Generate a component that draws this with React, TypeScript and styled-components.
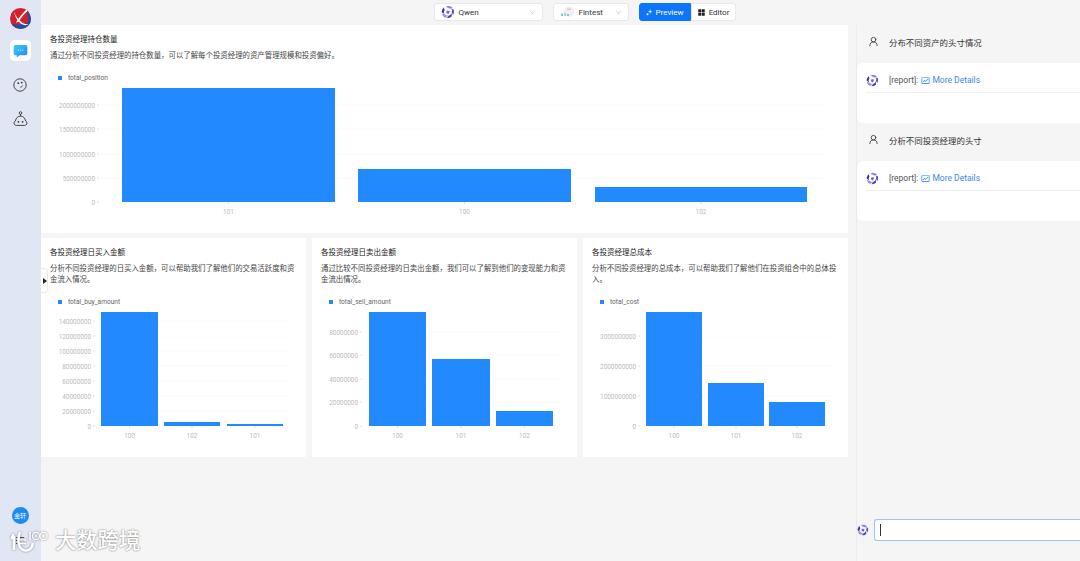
import React from 'react'
import styled, {createGlobalStyle} from 'styled-components'
import {AiFillAppstore, AiOutlineDown, AiOutlineFund} from 'react-icons/ai'
import {UserRound} from 'lucide-react'

const FONT = `Roboto, "Noto Sans CJK SC", "Liberation Sans", sans-serif`

const GlobalStyle = createGlobalStyle`
  html, body {
    margin: 0;
    padding: 0;
    height: 561px;
    overflow: hidden;
    background: #f5f5f6;
    font-family: ${FONT};
  }
  * {
    box-sizing: border-box;
  }
`

type Bar = {label: string; x: number; w: number; top: number}
type ChartData = {
  title: string
  description: string
  series: string
  width: number
  height: number
  base: number
  axisX: number
  ticks: {label: string; y: number}[]
  bars: Bar[]
}

const charts: ChartData[] = [
  {
    title: '各投资经理持仓数量',
    description: '通过分析不同投资经理的持仓数量，可以了解每个投资经理的资产管理规模和投资偏好。',
    series: 'total_position',
    width: 789,
    height: 136,
    base: 118,
    axisX: 47,
    ticks: [
      {label: '2000000000', y: 21},
      {label: '1500000000', y: 45},
      {label: '1000000000', y: 70},
      {label: '500000000', y: 94},
      {label: '0', y: 118}
    ],
    bars: [
      {label: '101', x: 72, w: 213, top: 4},
      {label: '100', x: 308, w: 213, top: 85},
      {label: '102', x: 545, w: 212, top: 103}
    ]
  },
  {
    title: '各投资经理日买入金额',
    description: '分析不同投资经理的日买入金额，可以帮助我们了解他们的交易活跃度和资金流入情况。',
    series: 'total_buy_amount',
    width: 256,
    height: 136,
    base: 118,
    axisX: 43,
    ticks: [
      {label: '140000000', y: 13},
      {label: '120000000', y: 28},
      {label: '100000000', y: 43},
      {label: '80000000', y: 58},
      {label: '60000000', y: 73},
      {label: '40000000', y: 88},
      {label: '20000000', y: 103},
      {label: '0', y: 118}
    ],
    bars: [
      {label: '100', x: 51, w: 57, top: 4},
      {label: '102', x: 114, w: 56, top: 114},
      {label: '101', x: 177, w: 56, top: 116}
    ]
  },
  {
    title: '各投资经理日卖出金额',
    description: '通过比较不同投资经理的日卖出金额，我们可以了解到他们的变现能力和资金流出情况。',
    series: 'total_sell_amount',
    width: 256,
    height: 136,
    base: 118,
    axisX: 39,
    ticks: [
      {label: '80000000', y: 24},
      {label: '60000000', y: 47},
      {label: '40000000', y: 71},
      {label: '20000000', y: 94},
      {label: '0', y: 118}
    ],
    bars: [
      {label: '100', x: 48, w: 57, top: 4},
      {label: '101', x: 111, w: 58, top: 51},
      {label: '102', x: 175, w: 57, top: 103}
    ]
  },
  {
    title: '各投资经理总成本',
    description: '分析不同投资经理的总成本，可以帮助我们了解他们在投资组合中的总体投入。',
    series: 'total_cost',
    width: 256,
    height: 136,
    base: 118,
    axisX: 46,
    ticks: [
      {label: '3000000000', y: 28},
      {label: '2000000000', y: 58},
      {label: '1000000000', y: 88},
      {label: '0', y: 118}
    ],
    bars: [
      {label: '100', x: 54, w: 56, top: 4},
      {label: '101', x: 116, w: 56, top: 75},
      {label: '102', x: 177, w: 56, top: 94}
    ]
  }
]

const replies = ['分布不同资产的头寸情况', '分析不同投资经理的头寸']

function BarChart({data}: {data: ChartData}) {
  return (
    <ChartSvg width={data.width} height={data.height}>
      {data.ticks.map((tick) => (
        <g key={tick.label}>
          {tick.label !== '0' && (
            <GridLine x1={data.axisX + 4} x2={data.width - 14} y1={tick.y} y2={tick.y} />
          )}
          <TickMark x1={data.axisX} x2={data.axisX + 2} y1={tick.y} y2={tick.y} />
          <AxisText x={data.axisX - 2} y={tick.y + 2.5} textAnchor="end">
            {tick.label}
          </AxisText>
        </g>
      ))}
      {data.bars.map((bar) => (
        <g key={bar.label}>
          <rect x={bar.x} y={bar.top} width={bar.w} height={data.base - bar.top} fill="#2389ff" />
          <TickMark
            x1={bar.x + bar.w / 2}
            x2={bar.x + bar.w / 2}
            y1={data.base}
            y2={data.base + 2}
          />
          <AxisText x={bar.x + bar.w / 2} y={data.base + 11.5} textAnchor="middle">
            {bar.label}
          </AxisText>
        </g>
      ))}
    </ChartSvg>
  )
}

function ChartCard({data, wide}: {data: ChartData; wide?: boolean}) {
  return (
    <Card $wide={wide}>
      <CardTitle>{data.title}</CardTitle>
      <CardDescription $wide={wide}>{data.description}</CardDescription>
      <Legend>
        <LegendDot />
        {data.series}
      </Legend>
      <BarChart data={data} />
    </Card>
  )
}

function QwenLogo({size = 14}: {size?: number}) {
  return (
    <svg width={size} height={size} viewBox="0 0 24 24">
      <path d="M12 1.500c3.400 0 6.300 1.300 8.200 3.600l-5 1.200-3.600-1.500L8.200 3z" fill="#8b7ee6" />
      <path d="M22 8c.9 3.400.3 6.600-1.500 9l-2.200-4.400.8-3.600-1.900-3.200z" fill="#5a4fcc" />
      <path d="M18.600 19.400c-2.400 2.400-5.600 3.400-8.600 3l2.900-4 3.400-1.600 1.600-3.200z" fill="#4a3fc0" />
      <path d="M7.600 22c-3.100-1.400-5.200-4-6-7l4.800.7 2.800 2.400 3.400.1z" fill="#9a90ec" />
      <path d="M1.200 12.400C1.200 9 2.600 6 5 4.100l1.300 4.700-1.600 3.200 1.100 3.400z" fill="#3a34ac" />
      <path d="M10 9.500l5 .6-2 5.400-4-2z" fill="#6a60d8" />
    </svg>
  )
}

function BrandLogo() {
  return (
    <svg width="21" height="21" viewBox="0 0 21 21">
      <defs>
        <clipPath id="brand-clip">
          <circle cx="10.500" cy="10.500" r="10.500" />
        </clipPath>
      </defs>
      <g clipPath="url(#brand-clip)">
        <rect width="21" height="21" fill="#d3202a" />
        <path d="M0 15c6 2.500 14 2 21-2v8H0z" fill="#1f4fa3" />
        <path d="M17 3c2 2 4 5 4 8v4l-3 1c1-4 0-9-2-12z" fill="#1f4fa3" />
        <path d="M4 3.500c1.500 4.500 4.500 8.500 8 11 1.800 1.300 4 2 6.500 1.800-2.800 1.700-6 .6-8.500-1.400C7 12.400 4.800 8.300 4 3.500z" fill="#fff" />
        <path d="M16.500 1.500C12.800 5 8.800 9.500 6 14.500l2.500-.4c2.400-4.200 5.400-8.200 9.500-11.700z" fill="#fff" />
      </g>
    </svg>
  )
}

function ChatTileIcon() {
  return (
    <svg width="15" height="14" viewBox="0 0 16 15">
      <defs>
        <linearGradient id="bubble" x1="0" y1="0" x2="1" y2="1">
          <stop offset="0" stopColor="#35cdf6" />
          <stop offset="1" stopColor="#2a86f2" />
        </linearGradient>
      </defs>
      <path
        d="M2.500 1h11A1.800 1.800 0 0 1 15.300 2.800v7.400A1.800 1.800 0 0 1 13.500 12H7l-3 2.400V12H2.500A1.800 1.800 0 0 1 .7 10.200V2.800A1.800 1.800 0 0 1 2.500 1z"
        fill="url(#bubble)"
      />
      <circle cx="5.600" cy="6.500" r="0.700" fill="#dff3ff" />
      <circle cx="8" cy="6.500" r="0.700" fill="#dff3ff" />
      <circle cx="10.400" cy="6.500" r="0.700" fill="#dff3ff" />
    </svg>
  )
}

function SmileIcon() {
  return (
    <svg width="14" height="14" viewBox="0 0 14 14" fill="none" stroke="#333" strokeWidth="0.9">
      <circle cx="7" cy="7" r="6.200" />
      <circle cx="5.300" cy="5.200" r="0.900" fill="#333" stroke="none" />
      <circle cx="8.700" cy="4.600" r="0.900" fill="#333" stroke="none" />
      <path d="M9.600 7.600c-.5 1-1.300 1.500-2.300 1.500" />
    </svg>
  )
}

function RobotIcon() {
  return (
    <svg width="15" height="16" viewBox="0 0 15 16" fill="none" stroke="#333" strokeWidth="0.9">
      <circle cx="7.500" cy="2" r="1.300" />
      <path d="M7.500 3.300v1.800" />
      <path d="M3.400 14.400h8.200c1.300 0 2.400-1 2.400-2.300 0-1-.6-1.800-1.400-2.100C12.100 7 10.100 5.100 7.500 5.100S2.900 7 2.400 10c-.8.3-1.400 1.100-1.400 2.100 0 1.300 1.100 2.300 2.400 2.300z" />
      <circle cx="5.400" cy="10.800" r="0.900" fill="#333" stroke="none" />
      <circle cx="9.600" cy="10.800" r="0.900" fill="#333" stroke="none" />
    </svg>
  )
}

function FintestLogo() {
  return (
    <svg width="15" height="12" viewBox="0 0 15 12">
      <circle cx="9" cy="5.500" r="5.200" fill="#eef0f4" />
      <rect x="7" y="2.500" width="4" height="1.500" fill="#f3c498" />
      <rect x="1" y="7.500" width="2" height="2.500" fill="#7cc4ea" />
      <rect x="4" y="7" width="2" height="3" fill="#a5d6a5" />
      <rect x="7" y="8" width="2" height="2" fill="#7cc4ea" />
    </svg>
  )
}

function SparkIcon() {
  return (
    <svg width="7" height="7" viewBox="0 0 7 7" fill="#fff">
      <path d="M4.200.500l.6 1.600 1.600.6-1.600.6-.6 1.600-.6-1.600L2 2.700l1.600-.6z" />
      <circle cx="1.500" cy="5.300" r="1" />
    </svg>
  )
}

export default function App() {
  return (
    <Page>
      <GlobalStyle />
      <Sidebar>
        <BrandLogo />
        <ChatTile>
          <ChatTileIcon />
        </ChatTile>
        <SideIcon>
          <SmileIcon />
        </SideIcon>
        <SideIcon>
          <RobotIcon />
        </SideIcon>
        <SideBottom>
          <Avatar>金轩</Avatar>
          <MenuLines />
        </SideBottom>
      </Sidebar>
      <Main>
        <TopBar>
          <Select $width={109}>
            <QwenLogo />
            <SelectLabel>Qwen</SelectLabel>
            <Chevron />
          </Select>
          <Select $width={76}>
            <FintestLogo />
            <SelectLabel>Fintest</SelectLabel>
            <Chevron />
          </Select>
          <Segmented>
            <Segment $active>
              <SparkIcon />
              Preview
            </Segment>
            <Segment>
              <AiFillAppstore size={9} color="#222" />
              Editor
            </Segment>
          </Segmented>
        </TopBar>
        <Content>
          <Dashboard>
            <ChartCard data={charts[0]} wide />
            {charts.slice(1).map((chart) => (
              <ChartCard key={chart.series} data={chart} />
            ))}
            <CollapseTab />
          </Dashboard>
          <ChatPanel>
            {replies.map((question) => (
              <Exchange key={question}>
                <Question>
                  <UserRound size={11} color="#333" strokeWidth={1.8} />
                  {question}
                </Question>
                <Answer>
                  <AnswerRow>
                    <QwenLogo size={13} />
                    <AnswerText>
                      [report]:
                      <AiOutlineFund size={9} color="#1677ff" />
                      <DetailsLink>More Details</DetailsLink>
                    </AnswerText>
                  </AnswerRow>
                </Answer>
              </Exchange>
            ))}
            <InputRow>
              <QwenLogo size={12} />
              <InputBox>
                <Caret />
              </InputBox>
            </InputRow>
          </ChatPanel>
        </Content>
      </Main>
      <Watermark>
        <WatermarkMark>
          <svg width="38" height="22" viewBox="0 0 38 22" fill="none" stroke="#fff">
            <path d="M3.500 4L1.500 9M4 6v14" strokeWidth="2.500" />
            <path d="M10 2C7 10 8 19 15 20.500c4.500.5 7.500-3 8-7.500" strokeWidth="2.500" />
            <path d="M8 10h8M8 13.500h8" strokeWidth="1.500" />
            <path d="M20 2v8" strokeWidth="1.500" />
            <circle cx="26" cy="6" r="3.600" strokeWidth="1.200" />
            <circle cx="33.500" cy="6" r="3.600" strokeWidth="1.200" />
          </svg>
        </WatermarkMark>
        <WatermarkText>大数跨境</WatermarkText>
      </Watermark>
    </Page>
  )
}

const Page = styled.div`
  position: relative;
  display: flex;
  width: 1080px;
  height: 561px;
  overflow: hidden;
  background: #f5f5f6;
`

const Sidebar = styled.nav`
  display: flex;
  flex-direction: column;
  align-items: center;
  flex: 0 0 41px;
  padding: 8px 1px 0 0;
  background: #e0e6f3;
`

const ChatTile = styled.div`
  display: flex;
  align-items: center;
  justify-content: center;
  width: 21px;
  height: 21px;
  margin-top: 11px;
  border-radius: 5px;
  background: #fff;
`

const SideIcon = styled.div`
  display: flex;
  align-items: center;
  justify-content: center;
  width: 21px;
  height: 16px;
  margin-top: 16px;

  & + & {
    margin-top: 18px;
  }
`

const SideBottom = styled.div`
  display: flex;
  flex-direction: column;
  align-items: center;
  gap: 13px;
  margin-top: auto;
  padding-bottom: 17px;
`

const Avatar = styled.div`
  display: flex;
  align-items: center;
  justify-content: center;
  width: 17px;
  height: 17px;
  border-radius: 50%;
  background: #1b8bf5;
  color: #fff;
  font-size: 6px;
`

const MenuLines = styled.div`
  position: relative;
  width: 8px;
  height: 7px;
  border-top: 1px solid #555;
  border-bottom: 1px solid #555;

  &::after {
    content: '';
    position: absolute;
    top: 2px;
    left: 0;
    right: 0;
    height: 1px;
    background: #555;
  }
`

const Main = styled.div`
  display: flex;
  flex-direction: column;
  flex: 1;
  min-width: 0;
`

const TopBar = styled.header`
  display: flex;
  align-items: flex-start;
  justify-content: center;
  gap: 10px;
  flex: 0 0 25px;
  padding: 3px 0 0 48px;
`

const Select = styled.div<{$width: number}>`
  display: flex;
  align-items: center;
  width: ${(p) => p.$width}px;
  height: 18px;
  padding: 0 6px;
  border: 1px solid #e8e8ea;
  border-radius: 3px;
  background: #fff;
`

const SelectLabel = styled.span`
  flex: 1;
  margin-left: 4px;
  color: #333;
  font-size: 8px;
`

const Chevron = styled(AiOutlineDown).attrs({size: 7})`
  color: #c4c4c4;
`

const Segmented = styled.div`
  display: flex;
  height: 18px;
`

const Segment = styled.div<{$active?: boolean}>`
  display: flex;
  align-items: center;
  justify-content: center;
  gap: 3px;
  width: ${(p) => (p.$active ? 52 : 45)}px;
  border: 1px solid ${(p) => (p.$active ? '#0c75fc' : '#e8e8ea')};
  border-radius: ${(p) => (p.$active ? '3px 0 0 3px' : '0 3px 3px 0')};
  background: ${(p) => (p.$active ? '#0c75fc' : '#fff')};
  color: ${(p) => (p.$active ? '#fff' : '#333')};
  font-size: 8px;
`

const Content = styled.div`
  display: flex;
  flex: 1;
  min-height: 0;
`

const Dashboard = styled.main`
  position: relative;
  display: grid;
  grid-template-columns: repeat(3, 265px);
  grid-template-rows: 208px 219px;
  gap: 5px 6px;
  align-content: start;
  flex: 0 0 815px;
`

const Card = styled.section<{$wide?: boolean}>`
  grid-column: ${(p) => (p.$wide ? '1 / -1' : 'auto')};
  padding: 10px 9px 0;
  background: #fff;
`

const CardTitle = styled.h3`
  margin: 0;
  color: #222;
  font-size: 7.5px;
  font-weight: 400;
  line-height: 10px;
`

const CardDescription = styled.p<{$wide?: boolean}>`
  margin: 5px 0 0;
  padding-right: 1px;
  color: #444;
  font-size: 7.42px;
  line-height: 11px;
  min-height: ${(p) => (p.$wide ? 11 : 22)}px;
  text-spacing-trim: space-all;
`

const Legend = styled.div`
  display: flex;
  align-items: center;
  gap: 6px;
  margin: 12px 0 0 8px;
  color: #666;
  font-size: 6.6px;
  line-height: 10px;
`

const LegendDot = styled.i`
  width: 4px;
  height: 4px;
  background: #2389ff;
`

const ChartSvg = styled.svg`
  display: block;
  margin-top: 1px;
`

const GridLine = styled.line`
  stroke: #f6f6f6;
  stroke-width: 1;
  stroke-dasharray: 2 2;
`

const TickMark = styled.line`
  stroke: #cfcfcf;
  stroke-width: 0.6;
`

const AxisText = styled.text`
  fill: #bababa;
  font-family: ${FONT};
  font-size: 6.4px;
`

const CollapseTab = styled.div`
  position: absolute;
  top: 243px;
  left: 0;
  display: flex;
  align-items: center;
  width: 7px;
  height: 25px;
  border: 1px solid #eaeaea;
  border-left: 0;
  border-radius: 0 4px 4px 0;
  background: #fff;

  &::before {
    content: '';
    margin-left: 2px;
    border-top: 3.5px solid transparent;
    border-bottom: 3.5px solid transparent;
    border-left: 4px solid #222;
  }
`

const ChatPanel = styled.aside`
  display: flex;
  flex-direction: column;
  flex: 1;
  min-width: 0;
  border-left: 1px solid #ebebed;
`

const Exchange = styled.div`
  display: flex;
  flex-direction: column;
`

const Question = styled.div`
  display: flex;
  align-items: center;
  gap: 10px;
  height: 33px;
  padding-left: 11px;
  color: #333;
  font-size: 8.45px;
`

const Answer = styled.div`
  height: 60px;
  margin-top: 5px;
  padding-left: 9px;
  border-radius: 6px 0 0 6px;
  background: #fff;
`

const AnswerRow = styled.div`
  display: flex;
  align-items: center;
  gap: 10px;
  height: 30px;
  padding-top: 5px;
  border-bottom: 1px solid #f0f0f0;
`

const AnswerText = styled.div`
  display: flex;
  align-items: center;
  gap: 2.5px;
  color: #555;
  font-size: 8.5px;
`

const DetailsLink = styled.span`
  color: #3f86ea;
`

const InputRow = styled.div`
  display: flex;
  align-items: center;
  gap: 5px;
  margin-top: auto;
  margin-bottom: 20px;
`

const InputBox = styled.div`
  display: flex;
  align-items: center;
  flex: 1;
  height: 22px;
  padding-left: 5px;
  border: 1.5px solid #9cc4f0;
  border-right: 0;
  border-radius: 3px 0 0 3px;
  background: #fff;
`

const Caret = styled.i`
  width: 1px;
  height: 12px;
  background: #333;
`

const Watermark = styled.div`
  position: absolute;
  left: 10px;
  bottom: 8px;
  display: flex;
  align-items: center;
  gap: 7px;
  pointer-events: none;
`

const WatermarkMark = styled.div`
  display: flex;
  filter: drop-shadow(0 0 1px rgba(0, 0, 0, 0.45));
`

const WatermarkText = styled.span`
  color: #fff;
  font-size: 21.3px;
  font-weight: 500;
  line-height: 24px;
  text-shadow: 0 0 2px rgba(0, 0, 0, 0.6);
`
